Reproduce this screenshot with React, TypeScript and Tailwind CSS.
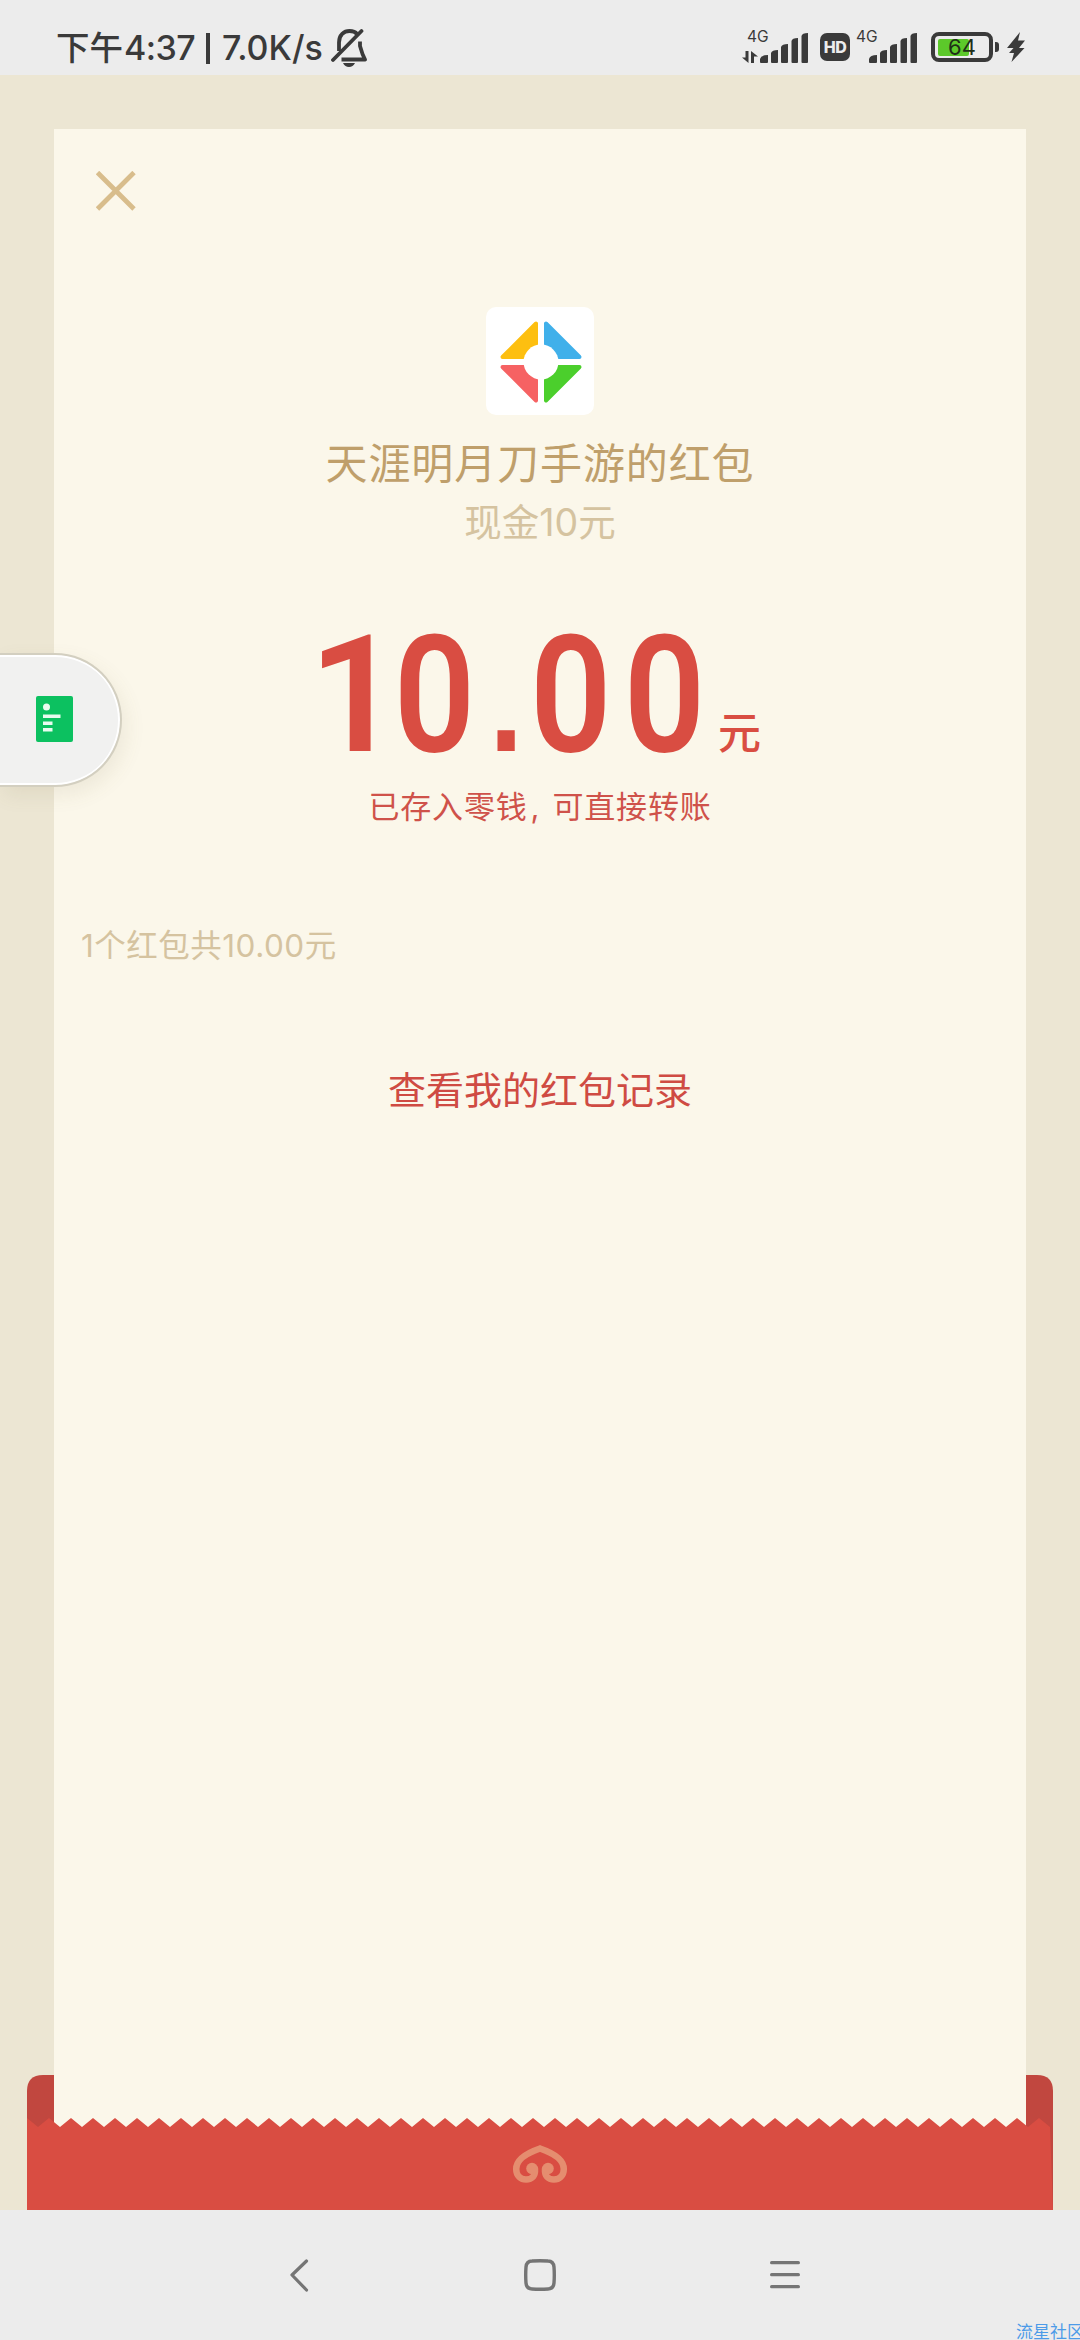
import React from "react";

const FONT = "font-['Inter','Noto_Sans_CJK_SC',sans-serif]";

function BellOffIcon() {
  return (
    <svg width="36" height="40" viewBox="0 0 36 40" fill="none" stroke="#3a3a3a" strokeWidth="3.8">
      <path d="M8 24V15.500C8 8 13 4 18.500 4C22 4 24.500 5 26 7" />
      <path d="M29 14.500V19L31.500 27L34 32.500H10.500" strokeLinejoin="round" />
      <path d="M2 33L30.500 4" strokeLinecap="round" />
      <path d="M12 36H24Q22 40 18 40T12 36Z" fill="#3a3a3a" stroke="none" />
    </svg>
  );
}

function SignalBars() {
  return (
    <svg className="shrink-0" width="49" height="30" viewBox="0 0 49 30" fill="#3a3a3a">
      <path d="M0 29V26Q1 22 8 22V29Q8 30 7 30H1Q0 30 0 29Z" />
      <path d="M11 29V20Q12 17 18 17V29Q18 30 17 30H12Q11 30 11 29Z" />
      <path d="M21 29V14Q22 11 28 11V29Q28 30 27 30H22Q21 30 21 29Z" />
      <path d="M31.500 29V8Q32 5 38 5V29Q38 30 37 30H32.500Q31.500 30 31.500 29Z" />
      <path d="M41.500 29V3Q42 0 48 0V29Q48 30 47 30H42.500Q41.500 30 41.500 29Z" />
    </svg>
  );
}

function DataArrows() {
  return (
    <svg width="16" height="12" viewBox="0 0 16 12" fill="#3a3a3a">
      <path d="M3.500 0H6.500V12L0 6.500H3.500Z" />
      <path d="M9 0L16 5.500H12V12H9Z" />
    </svg>
  );
}

function StatusBar() {
  return (
    <header className="flex h-[75px] shrink-0 items-start bg-[#ececec] text-[#3a3a3a] *:shrink-0">
      <div className="ml-[56px] mt-[27px] flex h-[42px] w-[270px] items-center whitespace-pre text-[34px] font-medium leading-[42px]">
        <span className="w-[68px] shrink-0 text-[33.500px]">下午</span>
        <span className="w-[72px] shrink-0 tracking-[-0.600px]">4:37</span>
        <span className="ml-[10px] mr-[12px] h-[31px] w-[4px] shrink-0 bg-[#3a3a3a]" />
        <span>7.0K/s</span>
      </div>
      <div className="ml-[5px] mt-[27px]">
        <BellOffIcon />
      </div>

      <div className="ml-[375px] mt-[30px] flex h-[33px] w-[67px] items-end">
        <div className="flex w-[18px] flex-col">
          <span className="ml-[5px] text-[15.500px] leading-[13px]">4G</span>
          <div className="mt-[8px]">
            <DataArrows />
          </div>
        </div>
        <SignalBars />
      </div>
      <div className="ml-[11px] mt-[33px] flex h-[28px] w-[30px] items-center justify-center rounded-[7px] bg-[#3a3a3a] text-[16px] font-extrabold tracking-[-0.500px] text-[#ececec]">
        HD
      </div>
      <div className="ml-[6px] mt-[30px] flex h-[33px] w-[62px] items-end">
        <div className="flex h-full w-[13px] items-start">
          <span className="text-[15.500px] leading-[13px]">4G</span>
        </div>
        <SignalBars />
      </div>
      <div className="ml-[13px] mt-[32px] flex items-center gap-[2px]">
        <div className="relative flex h-[30px] w-[62px] items-center rounded-[8px] border-[4px] border-[#3a3a3a] pl-[3px]">
          <div className="h-[17px] w-[31px] rounded-[2px] bg-[#5cc92a]" />
          <span className="absolute inset-x-0 top-0 text-center text-[22px] leading-[22px] text-[#1f2f18]">64</span>
        </div>
        <div className="h-[10px] w-[4px] rounded-r-[3px] bg-[#3a3a3a]" />
      </div>
      <svg className="ml-[8px] mt-[32px]" width="18" height="30" viewBox="0 0 18 30" fill="#3a3a3a">
        <path d="M13 0L0 16H6.500L2 21H7L4.500 30L17.500 16H12L18 8.500H11Z" />
      </svg>
    </header>
  );
}

function AppLogo() {
  return (
    <div className="h-[108px] w-[108px] rounded-[10px] bg-white">
      <svg width="108" height="108" viewBox="0 0 108 108" strokeWidth="4" strokeLinejoin="round">
        <path d="M50 16.500V50H16.500Z" fill="#fdbf10" stroke="#fdbf10" />
        <path d="M60 16.500V50H93.500Z" fill="#40b0ea" stroke="#40b0ea" />
        <path d="M50 93.500V60H16.500Z" fill="#f66263" stroke="#f66263" />
        <path d="M60 93.500V60H93.500Z" fill="#4bcf2c" stroke="#4bcf2c" />
        <circle cx="55" cy="55" r="17.500" fill="#fff" />
      </svg>
    </div>
  );
}

function Amount() {
  return (
    <div className="flex h-[164px] w-[452px] items-start text-[#d94d42]">
      <div className="h-[164px] w-[402px] shrink-0">
        <div className="w-[402px] origin-left scale-x-[0.870] whitespace-nowrap font-['Roboto',sans-serif] text-[164px] font-semibold leading-[166px] tracking-[14px]">
          <span className="inline-block scale-x-[1.130] tracking-[-2px]">1</span>
          <span className="tracking-[16px]">0</span>
          <span className="font-['Liberation_Sans',sans-serif] text-[140px] font-bold leading-none tracking-[8px]">.</span>00
        </div>
      </div>
      <span className="ml-[2px] mt-[91px] text-[43px] font-medium leading-[60px]">元</span>
    </div>
  );
}

function Envelope() {
  const teeth = Array.from({ length: 47 }, (_, i) => `L${i * 22} 43L${i * 22 + 11} 52`).join("");
  return (
    <svg className="mx-[27px] block shrink-0" width="1026" height="135" viewBox="0 0 1026 135">
      <path d="M0 135V16Q0 0 16 0H1010Q1026 0 1026 16V135Z" fill="#c1473f" />
      <path d="M27 0H999V60H27Z" fill="#fbf7ea" />
      <path d={`M0 135${teeth}L1026 135Z`} fill="#d94d42" />
      <path
        d="M508 94C508.500 101 505 104.500 499 104.500C494 104.500 489.200 101 489.200 94C489.200 86 497 79 513 73.500C529 79 536.800 86 536.800 94C536.800 101 532 104.500 527 104.500C521 104.500 517.500 101 518 94"
        fill="none"
        stroke="#e58d6f"
        strokeWidth="6.5"
        strokeLinecap="round"
      />
      <circle cx="505" cy="93.500" r="5.800" fill="#e58d6f" />
      <circle cx="521" cy="93.500" r="5.800" fill="#e58d6f" />
    </svg>
  );
}

function NavBar() {
  return (
    <nav className="flex h-[130px] shrink-0 items-start overflow-hidden bg-[#ececec] *:shrink-0">
      <svg className="ml-[290px] mt-[49px]" width="19" height="33" viewBox="0 0 19 33" fill="none" stroke="#757575" strokeWidth="3.200" strokeLinecap="round" strokeLinejoin="round">
        <path d="M16.500 2L2 16L16.500 31" />
      </svg>
      <svg className="ml-[215px] mt-[49px]" width="32" height="32" viewBox="0 0 32 32" fill="none" stroke="#757575" strokeWidth="3.400">
        <path d="M8 2Q16 1.400 24 2Q29.500 2.200 30 8Q30.600 16 30 24Q29.500 29.800 24 30Q16 30.600 8 30Q2.500 29.800 2 24Q1.400 16 2 8Q2.500 2.200 8 2Z" />
      </svg>
      <svg className="ml-[214px] mt-[50px]" width="30" height="30" viewBox="0 0 30 30" stroke="#757575" strokeWidth="3.200" strokeLinecap="round">
        <path d="M1.600 2.700H28.400M1.600 14.700H28.400M1.600 26.700H28.400" />
      </svg>
      <span className="ml-[216px] mt-[112px] whitespace-nowrap text-[17px] leading-[20px] text-[#4c9be8]">流星社区</span>
    </nav>
  );
}

function FloatingTab() {
  return (
    <div className="absolute left-0 top-[653px] flex h-[134px] w-[122px] items-center rounded-r-full border-y-2 border-r-2 border-[#d3cfc0] bg-[#f1f1f0] shadow-[4px_8px_20px_rgba(120,110,70,0.1),inset_-2px_0_0_#fff,inset_0_2px_0_#fff,inset_0_-2px_0_#fff]">
      <svg className="mb-[2px] ml-[36px]" width="37" height="46" viewBox="0 0 37 46">
        <rect width="37" height="46" rx="2" fill="#0cc160" />
        <g fill="#e9fbef">
          <circle cx="10.500" cy="11" r="3.500" />
          <path d="M7 18.500H24.500V22H7ZM7 25.500H16.500V29H7ZM7 32H16.500V35.500H7Z" />
        </g>
      </svg>
    </div>
  );
}

export default function App() {
  return (
    <div className={`relative flex h-[2340px] w-[1080px] flex-col overflow-hidden bg-[#ece6d3] ${FONT}`}>
      <StatusBar />
      <main className="mx-[54px] mt-[54px] flex h-[1946px] shrink-0 flex-col items-center bg-[#fbf7ea]">
        <svg className="ml-[42px] mt-[42px] self-start" width="40" height="40" viewBox="0 0 40 40" stroke="#d8bd8c" strokeWidth="4.800">
          <path d="M1.500 1.500L38 38M38 1.500L1.500 38" />
        </svg>
        <div className="mt-[96px]">
          <AppLogo />
        </div>
        <h1 className="mt-[19px] text-[42px] leading-[60px] tracking-[0.900px] text-[#bf9f6b]">天涯明月刀手游的红包</h1>
        <p className="mt-[1px] text-[37.500px] leading-[56px] text-[#d5c3a0]">现金10元</p>
        <div className="mt-[61px]">
          <Amount />
        </div>
        <p className="mt-[7px] flex text-[31px] leading-[48px] tracking-[0.800px] text-[#cf524a]">
          已存入零钱<span className="w-[25px] pl-[3px]">,</span>可直接转账
        </p>
        <p className="ml-[27px] mt-[91px] self-start text-[31.500px] leading-[48px] tracking-[0.500px] text-[#d5c3a0]">1个红包共10.00元</p>
        <a className="mt-[92px] text-[38px] leading-[56px] text-[#cf4b43]">查看我的红包记录</a>
      </main>
      <Envelope />
      <NavBar />
      <FloatingTab />
    </div>
  );
}
